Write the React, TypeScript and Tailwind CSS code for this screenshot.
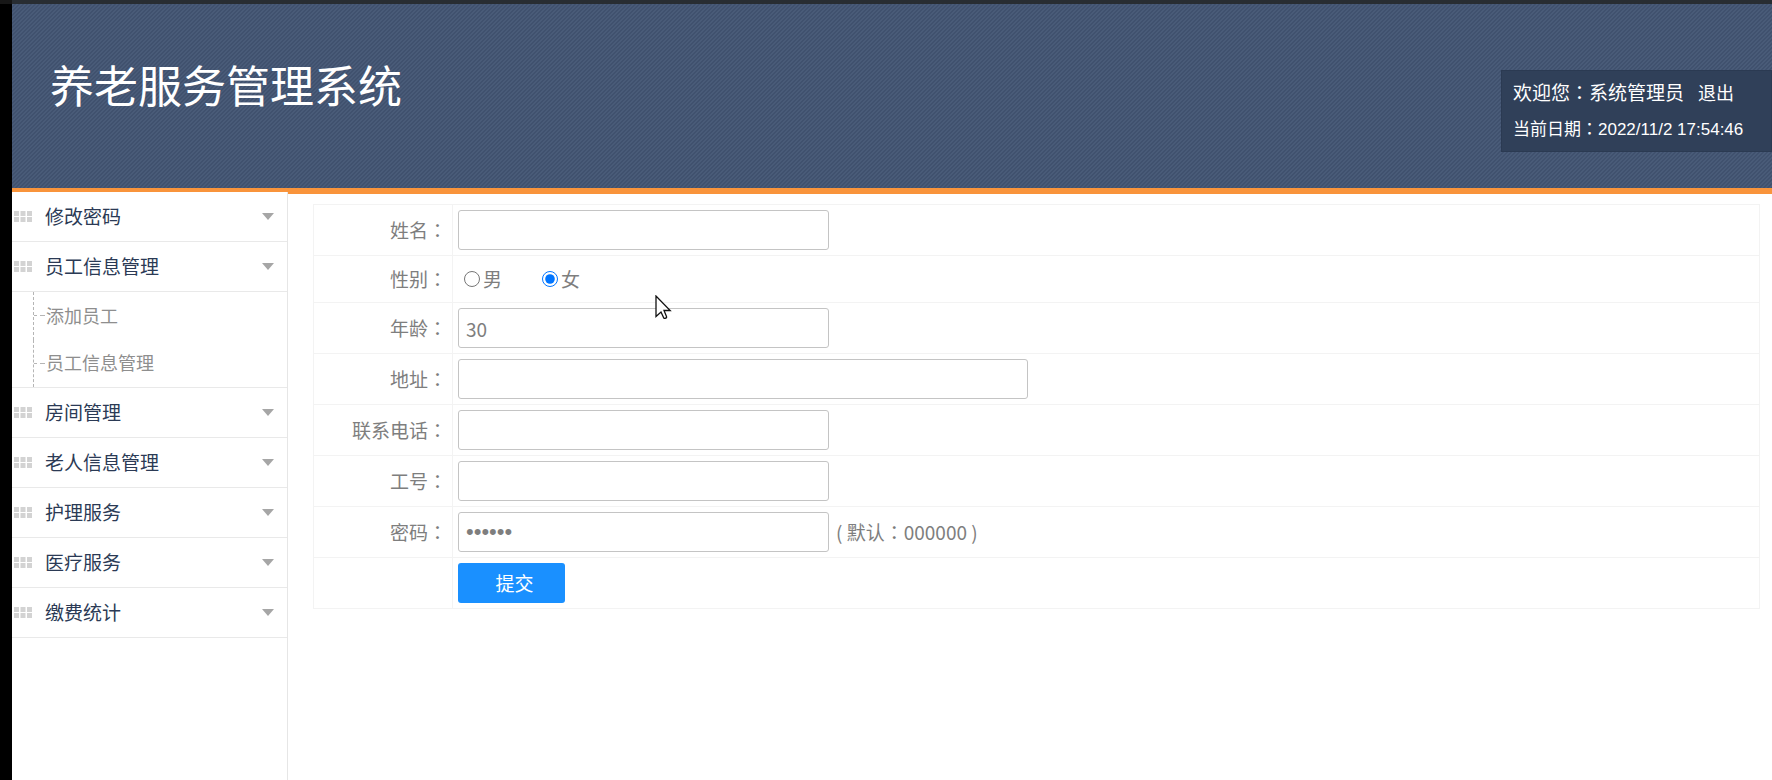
import { useState } from "react";
import type { ReactNode } from "react";

type MenuItem = { title: string; children?: string[] };

const menu: MenuItem[] = [
  { title: "修改密码" },
  { title: "员工信息管理", children: ["添加员工", "员工信息管理"] },
  { title: "房间管理" },
  { title: "老人信息管理" },
  { title: "护理服务" },
  { title: "医疗服务" },
  { title: "缴费统计" },
];

const inputClass =
  "h-10 rounded-[3px] border border-[#c4c4c4] bg-white px-[7px] text-[#7e7e7e] outline-none";

export default function App() {
  return (
    <div className="flex min-h-screen flex-col bg-white font-['Noto_Sans_CJK_SC',sans-serif] text-[19px] leading-6">
      <div className="h-1 border-l-[12px] border-[#171717] bg-[#282d32]" />
      <div className="flex flex-1 flex-col border-l-[12px] border-black">
        <Header />
        <div className="flex flex-1">
          <Sidebar />
          <main className="min-w-0 flex-1 pt-[10px] pr-3 pl-[25px]">
            <StaffForm />
          </main>
        </div>
      </div>
      <Pointer />
    </div>
  );
}

// full width punctuation sits in the middle of its cell
function Mark({ children }: { children: ReactNode }) {
  return <span className="font-['Noto_Sans_CJK_TC',sans-serif]">{children}</span>;
}

function Header() {
  return (
    <header className="flex h-[190px] items-start justify-between border-b-[6px] border-[#f9943b] bg-[#445572] bg-[linear-gradient(135deg,#495b78_25%,#40516e_25%,#40516e_50%,#495b78_50%,#495b78_75%,#40516e_75%)] bg-size-[4px_4px] text-white">
      <h1 className="pt-[50px] pl-[38px] text-[44px] leading-[60px]">养老服务管理系统</h1>
      <div className="mt-[66px] h-[82px] w-[271px] border border-[#2b3a52] bg-[#304059] pt-[9px] pl-[11px]">
        <p className="flex h-9 items-start gap-[14px]">
          <span>
            欢迎您<Mark>：</Mark>系统管理员
          </span>
          <a href="#" className="text-[18px]">
            退出
          </a>
        </p>
        <p className="text-[17px]">
          当前日期<Mark>：</Mark>
          <span className="font-['Liberation_Sans',sans-serif]">2022/11/2 17:54:46</span>
        </p>
      </div>
    </header>
  );
}

function Sidebar() {
  return (
    <nav className="-mt-[2px] w-[276px] shrink-0 border-r border-[#e6e6e6] bg-white">
      <ul>
        {menu.map((item) => (
          <li key={item.title}>
            <button className="flex h-[50px] w-full items-center border-b border-[#e9e9e9] pr-[13px] pl-[2px] text-left text-[#2b3a55]">
              <GripIcon />
              <span className="ml-[13px] flex-1 pb-[2px]">{item.title}</span>
              <svg width="12" height="7" viewBox="0 0 12 7" fill="#a6a6a6">
                <path d="M0 0h12L6 7z" />
              </svg>
            </button>
            {item.children && (
              <ul className="flex h-24 flex-col border-b border-[#e9e9e9] pl-[21px]">
                {item.children.map((child) => (
                  <li
                    key={child}
                    className="flex flex-1 items-center border-l border-dashed border-[#b5b5b5] text-[18px] text-[#8e8e8e]"
                  >
                    <svg width="12" height="1" viewBox="0 0 12 1" fill="#b5b5b5">
                      <path d="M0 0h3v1H0zM6 0h5v1H6z" />
                    </svg>
                    <a href="#" className="pb-[2px]">
                      {child}
                    </a>
                  </li>
                ))}
              </ul>
            )}
          </li>
        ))}
      </ul>
    </nav>
  );
}

function GripIcon() {
  return (
    <svg width="18" height="11" viewBox="0 0 18 11" fill="#d3d3d3">
      <path d="M0 0h5v5H0zM6.500 0h5v5h-5zM13 0h5v5h-5zM0 6h5v5H0zM6.500 6h5v5h-5zM13 6h5v5h-5z" />
    </svg>
  );
}

function Row({ label, id, children }: { label?: string; id?: string; children: ReactNode }) {
  return (
    <tr>
      <th className="w-[139px] border border-[#f3f3f3] pr-[5px] text-right font-normal">
        {label && (
          <label htmlFor={id}>
            {label}
            <Mark>：</Mark>
          </label>
        )}
      </th>
      <td className="border border-[#f3f3f3] px-[5px] py-[5px]">
        <div className="flex items-center">{children}</div>
      </td>
    </tr>
  );
}

function StaffForm() {
  const [gender, setGender] = useState("女");
  return (
    <form onSubmit={(e) => e.preventDefault()}>
      <table className="w-full border-collapse text-[#7e7e7e]">
        <tbody>
          <Row label="姓名" id="name">
            <input id="name" type="text" className={`${inputClass} w-[371px]`} />
          </Row>
          <Row label="性别" id="male">
            <div className="flex h-9 items-center gap-10 pl-[6px]">
              {["男", "女"].map((g) => (
                <label key={g} className="flex items-center gap-[3px]">
                  <input
                    id={g === "男" ? "male" : "female"}
                    type="radio"
                    name="gender"
                    className="h-4 w-4"
                    checked={gender === g}
                    onChange={() => setGender(g)}
                  />
                  {g}
                </label>
              ))}
            </div>
          </Row>
          <Row label="年龄" id="age">
            <input id="age" type="text" defaultValue="30" className={`${inputClass} w-[371px]`} />
          </Row>
          <Row label="地址" id="address">
            <input id="address" type="text" className={`${inputClass} w-[570px]`} />
          </Row>
          <Row label="联系电话" id="phone">
            <input id="phone" type="text" className={`${inputClass} w-[371px]`} />
          </Row>
          <Row label="工号" id="jobNo">
            <input id="jobNo" type="text" className={`${inputClass} w-[371px]`} />
          </Row>
          <Row label="密码" id="password">
            <input
              id="password"
              type="password"
              defaultValue="000000"
              className={`${inputClass} w-[371px] font-['Liberation_Sans',sans-serif] text-[22px]`}
            />
            <span className="ml-[7px]">
              ( 默认<Mark>：</Mark>000000 )
            </span>
          </Row>
          <Row>
            <button type="submit" className="h-10 w-[107px] rounded-[3px] bg-[#1a90ff] pl-[6px] text-white">
              提交
            </button>
          </Row>
        </tbody>
      </table>
    </form>
  );
}

function Pointer() {
  return (
    <svg
      className="pointer-events-none absolute top-[295px] left-[655px]"
      width="17"
      height="25"
      viewBox="0 0 17 25"
      fill="#fff"
      stroke="#111"
      strokeWidth="1.300"
    >
      <path d="M1 1v20.500l5-4.500 2.800 6c1 1 3.200 0 2.700-1.400L9 15.500h6.200z" />
    </svg>
  );
}
